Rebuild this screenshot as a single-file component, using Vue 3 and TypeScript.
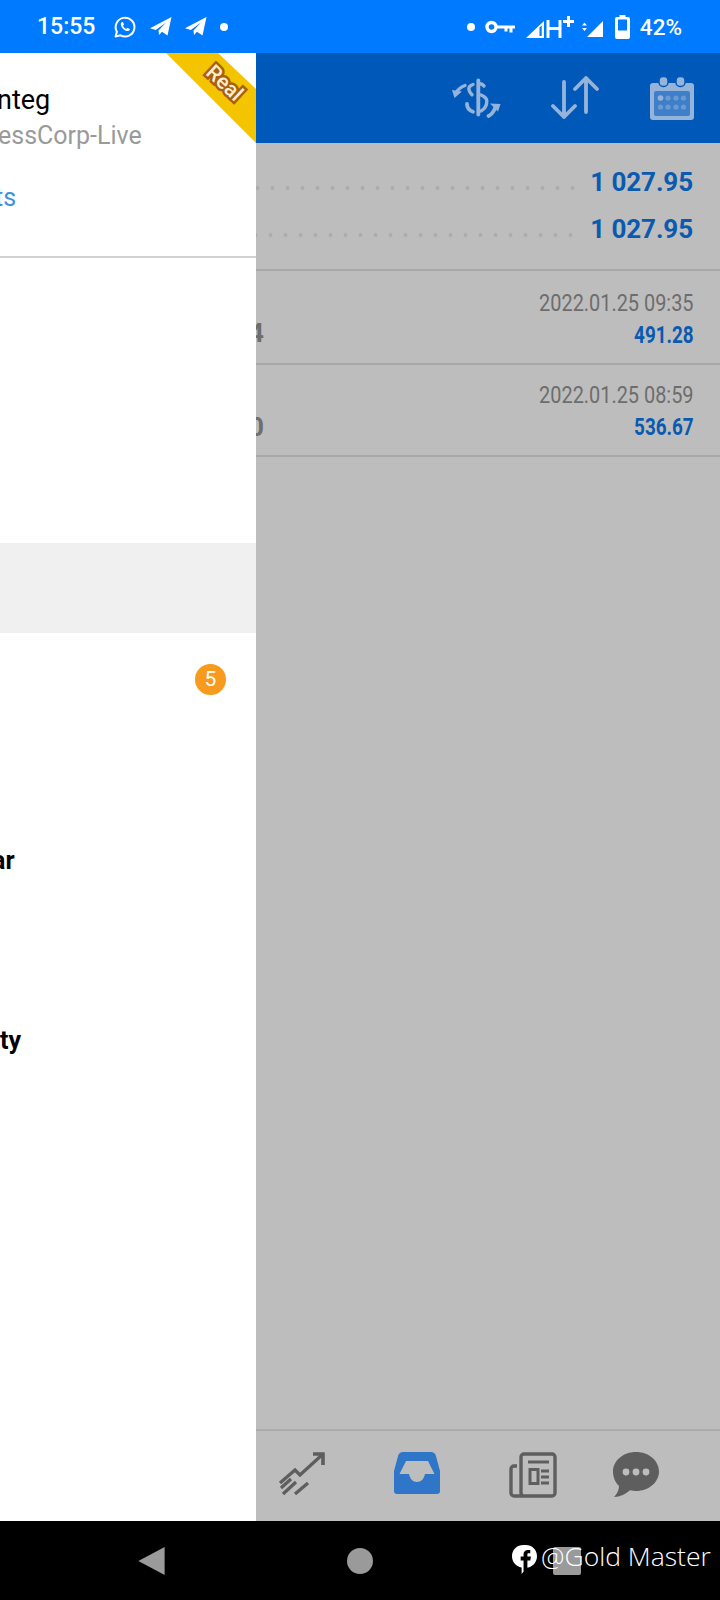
<script setup lang="ts">
interface Deal { date: string; amount: string; value: string }
const deals: Deal[] = [
  { date: '2022.01.25 09:35', amount: '4', value: '491.28' },
  { date: '2022.01.25 08:59', amount: '0', value: '536.67' },
]
const totals: string[] = ['1 027.95', '1 027.95']
const drawerRows = [
  { id: 1, text: '' },
  { id: 2, text: '' },
  { id: 3, text: '' },
  { id: 4, text: '', selected: true },
  { id: 5, text: '', badge: '5' },
  { id: 6, text: '' },
  { id: 7, text: 'ar', cls: 'lab-ar' },
  { id: 8, text: '' },
  { id: 9, text: 'ty', cls: 'lab-ty' },
]
</script>

<template>
  <div class="phone">
    <header class="status">
      <span class="time">15:55</span>
      <svg class="st-wa" viewBox="0 0 24 24" width="24" height="24">
        <path d="M2.6 21.6l1.3-4.8A9.4 9.4 0 1 1 7.4 20.3z" fill="none" stroke="#fff" stroke-width="2" stroke-linejoin="round"/>
        <path d="M8.8 7.2c-.8.6-1.2 1.5-.9 2.8.6 2.6 3.3 5.4 6 6 1.2.3 2.2-.1 2.8-1 .3-.4.3-.9 0-1.1l-1.900-1c-.3-.1-.6 0-.8.2l-.7.8c-1.400-.5-2.700-1.800-3.300-3.200l.7-.7c.2-.2.3-.5.2-.8l-.9-1.900c-.2-.4-.8-.4-1.200-.1z" fill="#fff"/>
      </svg>
      <svg class="st-tg" viewBox="0 0 22 19" width="22" height="19"><path d="M0 11.300L21.500 0 17.500 18.500 12 14.800 9 18 8.500 13.500 16 5.500 5.800 13z" fill="#fff"/></svg>
      <svg class="st-tg2" viewBox="0 0 22 19" width="22" height="19"><path d="M0 11.300L21.500 0 17.500 18.500 12 14.800 9 18 8.500 13.500 16 5.500 5.800 13z" fill="#fff"/></svg>
      <i class="st-dot st-dot-a"></i>
      <div class="st-right">
        <i class="st-dot"></i>
        <svg class="st-key" viewBox="0 0 30 14" width="30" height="14">
          <circle cx="6.500" cy="7" r="4.500" fill="none" stroke="#fff" stroke-width="3.400"/>
          <path d="M11 5.600h19v3h-2.500v4h-3v-4h-2v3h-3v-3H11z" fill="#fff"/>
        </svg>
        <svg class="st-sig" viewBox="0 0 48 24" width="48" height="24">
          <path d="M0 23L18 6v17z" fill="#fff"/>
          <path d="M13.500 12.500V21h2.200v-10.500z" fill="#007aff"/>
          <path d="M22 5v18M34 5v18M22 13.500h12" stroke="#fff" stroke-width="3" fill="none"/>
          <path d="M37 6.500h11M42.500 1v11" stroke="#fff" stroke-width="3" fill="none"/>
        </svg>
        <svg class="st-sig2" viewBox="0 0 21 22" width="21" height="22">
          <path d="M5 21L21 5v16z" fill="#fff"/>
          <path d="M0 9.500l2.500-3 2.500 3zM0 12l2.500 3 2.500-3z" fill="#fff"/>
        </svg>
        <svg class="st-bat" viewBox="0 0 15 24" width="15" height="24">
          <path d="M4.500 0h6v2H13a2 2 0 0 1 2 2v18a2 2 0 0 1-2 2H2a2 2 0 0 1-2-2V4a2 2 0 0 1 2-2h2.500z" fill="#fff"/>
          <rect x="3" y="4.500" width="9" height="11" fill="#007aff"/>
        </svg>
        <span class="pct">42%</span>
      </div>
    </header>

    <div class="screen">
      <div class="appbar">
        <svg class="ab-dollar" viewBox="0 0 50 40" width="50" height="40">
          <g fill="none" stroke="#96b3da" stroke-linecap="round">
            <path d="M26.300 2.500v34" stroke-width="3.800"/>
            <path d="M32 8c-1-1.500-2.500-2.300-4-2.300" stroke-width="3.400"/>
            <path d="M21 6.500c-3 1-4.500 3-4 5.300.3 2 1.500 3.500 3 5" stroke-width="3.400"/>
            <path d="M15 26c0 3.500 2.500 6.500 6 7.700" stroke-width="3.800"/>
            <path d="M29 17c3.500 1.500 5.800 3 5.800 6 0 4.500-2 8-5.800 10" stroke-width="3.400"/>
            <path d="M13 7.500C9 9 6 11 4 15" stroke-width="3.400"/>
            <path d="M36.500 38c3-1.500 5.500-4.500 7-9" stroke-width="3.800"/>
          </g>
          <path d="M0 12l10 1.500L2.500 20zM48.500 26l-10.500-.5 8 8z" fill="#96b3da"/>
        </svg>
        <svg class="ab-arrows" viewBox="0 0 48 44" width="48" height="44">
          <g fill="none" stroke="#96b3da" stroke-width="3.800" stroke-linecap="round" stroke-linejoin="round">
            <path d="M13 6v35M2 30l11 11 11-11"/>
            <path d="M35 2v34M24 13L35 2l11 11"/>
          </g>
        </svg>
        <svg class="ab-cal" viewBox="0 0 44 44" width="44" height="44">
          <rect x="0" y="7" width="44" height="37" rx="3" fill="#96b3da"/>
          <rect x="4" y="15" width="36" height="25" rx="2" fill="#3f7fc9"/>
          <rect x="9" y="0.500" width="9" height="10" rx="4" fill="#96b3da" stroke="#0059b9" stroke-width="1.500"/>
          <rect x="26" y="0.500" width="9" height="10" rx="4" fill="#96b3da" stroke="#0059b9" stroke-width="1.500"/>
          <circle cx="10.500" cy="22" r="2.800" fill="#96b3da"/>
          <g fill="#6b9ad3">
            <circle cx="18" cy="22" r="2.600"/><circle cx="26" cy="22" r="2.600"/><circle cx="33.500" cy="22" r="2.600"/>
            <circle cx="10.500" cy="31" r="2.600"/><circle cx="18" cy="31" r="2.600"/><circle cx="26" cy="31" r="2.600"/><circle cx="33.500" cy="31" r="2.600"/>
          </g>
        </svg>
      </div>

      <section class="summary">
        <div v-for="(t, i) in totals" :key="i" class="sum-row">
          <span class="dots" :class="{ alt: i === 1 }"></span>
          <span class="sum-val">{{ t }}</span>
        </div>
      </section>

      <article v-for="d in deals" :key="d.date" class="deal">
        <span class="deal-amt">{{ d.amount }}</span>
        <div class="deal-right">
          <span class="deal-date">{{ d.date }}</span>
          <span class="deal-val">{{ d.value }}</span>
        </div>
      </article>

      <div class="spacer"></div>

      <nav class="tabs">
        <svg class="tab tab-chart" viewBox="0 0 48 48" width="48" height="48">
          <g fill="none" stroke="#5e5e5e" stroke-width="3.300">
            <path d="M2 33l15-13 5 5L45 4"/>
            <path d="M35 4h10v11" stroke-width="3.600"/>
            <path d="M3 38l10-9M5 44l13-12M17 44l13-11"/>
          </g>
        </svg>
        <svg class="tab tab-inbox" viewBox="0 0 46 42" width="46" height="42">
          <path d="M9 0h28c2.500 0 4 1.500 4.800 3.500L46 19v20c0 2-1 3-3 3H3c-2 0-3-1-3-3V19L4.200 3.500C5 1.500 6.500 0 9 0z" fill="#2f75c8"/>
          <path d="M12 9h22l6.500 13H31c-1 5-4 8-8 8s-7-3-8-8H5.500z" fill="#bdbdbd"/>
        </svg>
        <svg class="tab tab-news" viewBox="0 0 48 46" width="48" height="46">
          <rect x="12" y="2" width="34" height="42" rx="3" fill="none" stroke="#5e5e5e" stroke-width="3.400"/>
          <path d="M8 14H5a3 3 0 0 0-3 3v24a3 3 0 0 0 3 3h9" fill="none" stroke="#5e5e5e" stroke-width="3.400"/>
          <path d="M19 10h21" stroke="#5e5e5e" stroke-width="3"/>
          <rect x="21" y="17.500" width="8" height="14" fill="none" stroke="#5e5e5e" stroke-width="3"/>
          <path d="M32 19h8M32 25h8M32 31h8" stroke="#5e5e5e" stroke-width="3"/>
        </svg>
        <svg class="tab tab-chat" viewBox="0 0 46 46" width="46" height="46">
          <path d="M23 0c12.700 0 23 8.700 23 19.500S35.700 39 23 39c-2 0-4-.2-6-.7C13 42 7 45 1 45c3-3 5-7 5-11C2 30.500 0 25 0 19.500 0 8.700 10.300 0 23 0z" fill="#5e5e5e"/>
          <circle cx="13" cy="20" r="3.400" fill="#bdbdbd"/><circle cx="23" cy="20" r="3.400" fill="#bdbdbd"/><circle cx="33" cy="20" r="3.400" fill="#bdbdbd"/>
        </svg>
      </nav>

      <aside class="drawer">
        <div class="dr-head">
          <div class="dr-name">nteg</div>
          <div class="dr-server">essCorp-Live</div>
          <div class="dr-link">ts</div>
        </div>
        <svg class="ribbon" viewBox="0 0 90 90" width="90" height="90"><path d="M0 0h52l38 36v54z" fill="#f4c400"/></svg>
        <span class="real">Real</span>
        <ul class="dr-list">
          <li v-for="r in drawerRows" :key="r.id" class="dr-row" :class="{ selected: r.selected }">
            <b v-if="r.text" class="dr-label" :class="r.cls">{{ r.text }}</b>
            <span v-if="r.badge" class="badge">{{ r.badge }}</span>
          </li>
        </ul>
      </aside>
    </div>

    <footer class="sysnav">
      <svg class="nav-back" viewBox="0 0 30 32" width="29" height="30"><path d="M29 1v30L1 16z" fill="#9a9a9a"/></svg>
      <i class="nav-home"></i>
      <i class="nav-recent"></i>
      <div class="mark">
        <svg viewBox="0 0 26 30" width="25" height="29">
          <path d="M12 0h2c7 0 12 5 12 11.500S21 23 15 23.500L10 30v-6.800C4 22 0 17.500 0 11.500 0 5 5 0 12 0z" fill="#fff"/>
          <path d="M19 5h-2.500C13.800 5 12 6.800 12 9.500V12H9v4h3v11h4V16h3l.7-4H16V9.800c0-.8.400-1.300 1.300-1.300H19z" fill="#000"/>
        </svg>
        <span class="mark-text">@Gold Master</span>
      </div>
    </footer>
  </div>
</template>

<style scoped>
.phone {
  width: 720px;
  height: 1600px;
  display: flex;
  flex-direction: column;
  font-family: Roboto, "Liberation Sans", sans-serif;
  background: #bdbdbd;
  overflow: hidden;
}
.status {
  height: 53px;
  flex: none;
  background: #007aff;
  display: flex;
  align-items: center;
  padding: 0 38px 0 37px;
  color: #fff;
  box-sizing: border-box;
}
.time { font-size: 23px; font-weight: 500; width: 59px; }
.st-wa { margin-left: 17px; }
.st-tg { margin-left: 13px; }
.st-tg2 { margin-left: 13px; }
.st-dot { width: 8px; height: 8px; border-radius: 50%; background: #fff; display: block; }
.st-dot-a { margin-left: 13px; }
.st-right { margin-left: auto; display: flex; align-items: center; }
.st-key { margin-left: 10px; }
.st-sig { margin-left: 11px; }
.st-sig2 { margin-left: 8px; }
.st-bat { margin-left: 12px; }
.pct { font-size: 22.500px; font-weight: 500; margin-left: 10px; }

.screen { position: relative; flex: 1; display: flex; flex-direction: column; min-height: 0; }
.appbar {
  height: 90px;
  flex: none;
  background: #0059b9;
  position: relative;
  display: flex;
  align-items: center;
  padding-left: 452px;
}
.ab-arrows { margin-left: 49px; }
.ab-cal { margin-left: 51px; }
.summary { height: 126px; flex: none; box-sizing: border-box; padding-top: 21px; }
.sum-row { height: 47px; display: flex; align-items: center; padding-right: 27px; }
.dots {
  flex: 1;
  height: 6px;
  margin-right: 14px;
  background-image: radial-gradient(circle at center, #acacac 1.700px, transparent 2.200px);
  background-size: 15px 6px;
  background-position: -5px 0;
  background-repeat: repeat-x;
}
.dots.alt { background-position: -7px 0; margin-right: 16px; }
.sum-val { font-size: 26px; font-weight: 700; color: #0a5ab0; white-space: nowrap; letter-spacing: -.1px; margin-bottom: 12px; }
.deal {
  height: 92px;
  flex: none;
  border-top: 2px solid #a8a8a8;
  box-sizing: border-box;
  display: flex;
  justify-content: space-between;
  padding-right: 26px;
}
.deal:first-of-type { height: 94px; }
.deal + .spacer { border-top: 2px solid #a8a8a8; }
.deal-amt {
  width: 264px;
  text-align: right;
  font-size: 26px;
  font-weight: 700;
  color: #6e6e6e;
  margin-top: 47px;
  line-height: 30px;
}
.deal-right { display: flex; flex-direction: column; align-items: flex-end; padding-top: 16px; }
.deal:first-of-type .deal-right { padding-top: 18px; }
.deal-date { font-size: 23px; line-height: 30px; color: #6d6d6d; transform: scaleX(.865); transform-origin: right center; white-space: nowrap; }
.deal-val { font-size: 23px; line-height: 30px; margin-top: 2px; font-weight: 700; color: #0a5ab0; transform: scaleX(.82); transform-origin: right center; }
.spacer { flex: 1; }
.tabs {
  height: 92px;
  flex: none;
  border-top: 2px solid #ababab;
  box-sizing: border-box;
  display: flex;
  align-items: center;
}
.tab { display: block; flex: none; }
.tab-chart { margin-left: 278px; margin-top: -4px; }
.tab-inbox { margin-left: 68px; margin-top: -6px; }
.tab-news { margin-left: 69px; margin-top: -2px; }
.tab-chat { margin-left: 56px; margin-top: -2px; }

.drawer {
  position: absolute;
  left: 0;
  top: 0;
  bottom: 0;
  width: 256px;
  background: #fff;
  overflow: hidden;
}
.dr-head { height: 205px; box-sizing: border-box; border-bottom: 2px solid #d2d2d2; padding-top: 30px; }
.dr-name { font-size: 27px; line-height: 34px; color: #000; margin-left: -3px; white-space: nowrap; }
.dr-server { font-size: 25px; line-height: 34px; color: #9a9a9a; margin-left: -2px; white-space: nowrap; margin-top: 2px; }
.dr-link { font-size: 25px; line-height: 34px; color: #3f90dc; margin-left: -5px; margin-top: 28px; white-space: nowrap; }
.ribbon { position: absolute; top: 0; right: 0; }
.real {
  position: absolute;
  left: 204px;
  top: 18px;
  font-size: 21px;
  line-height: 24px;
  font-weight: 500;
  color: #fdeecf;
  transform: rotate(43deg);
  -webkit-text-stroke: 5px #a85f12;
  paint-order: stroke fill;
}
.dr-list { list-style: none; margin: 0; padding: 15px 0 0; }
.dr-row { height: 90px; position: relative; display: flex; align-items: center; }
.dr-row.selected { background: #f0f0f0; }
.dr-label { font-size: 25px; color: #000; margin-top: 4px; white-space: nowrap; font-weight: 700; }
.lab-ar { margin-left: -8px; }
.lab-ty { margin-left: 0; }
.badge {
  position: absolute;
  left: 195px;
  top: 31px;
  width: 31px;
  height: 31px;
  border-radius: 50%;
  background: #f79a1e;
  color: #fff;
  font-size: 21px;
  line-height: 31px;
  text-align: center;
}
.sysnav { height: 79px; flex: none; background: #000; position: relative; display: flex; align-items: center; }
.nav-back { margin-left: 137px; }
.nav-home { width: 26px; height: 26px; border-radius: 50%; background: #9a9a9a; margin-left: 181px; display: block; }
.nav-recent { width: 28px; height: 28px; background: #9a9a9a; border-radius: 2px; margin-left: 180px; margin-top: 1px; display: block; }
.mark {
  position: absolute;
  left: 512px;
  top: 17px;
  display: flex;
  align-items: flex-start;
  gap: 4px;
  color: #fff;
}
.mark svg { margin-top: 7px; }
.mark-text { font-family: "Open Sans", Roboto, sans-serif; font-size: 26.500px; font-weight: 300; line-height: 36px; white-space: nowrap; }
</style>
